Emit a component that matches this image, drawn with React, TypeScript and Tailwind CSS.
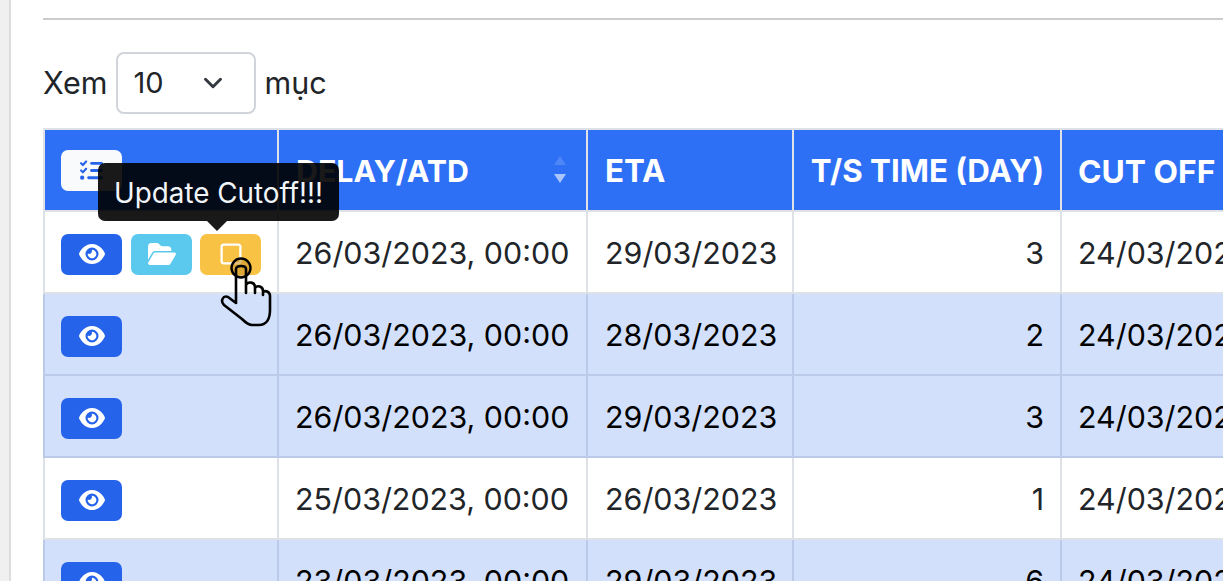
import React from 'react';
import { FaEye, FaFolderOpen, FaRegSquare, FaListCheck } from 'react-icons/fa6';
import { ChevronDown } from 'lucide-react';

interface ShipRow {
  atd: string;
  eta: string;
  days: number;
  cutoff: string;
  highlighted: boolean;
}

const rows: ShipRow[] = [
  { atd: '26/03/2023, 00:00', eta: '29/03/2023', days: 3, cutoff: '24/03/2023', highlighted: false },
  { atd: '26/03/2023, 00:00', eta: '28/03/2023', days: 2, cutoff: '24/03/2023', highlighted: true },
  { atd: '26/03/2023, 00:00', eta: '29/03/2023', days: 3, cutoff: '24/03/2023', highlighted: true },
  { atd: '25/03/2023, 00:00', eta: '26/03/2023', days: 1, cutoff: '24/03/2023', highlighted: false },
  { atd: '23/03/2023, 00:00', eta: '29/03/2023', days: 6, cutoff: '24/03/2023', highlighted: true },
];

const IconButton: React.FC<{ className: string; children: React.ReactNode }> = ({ className, children }) => (
  <button className={`w-[61px] h-[41px] rounded-[7px] flex items-center justify-center ${className}`}>{children}</button>
);

// hand cursor sitting on the yellow button
const HandCursor: React.FC = () => (
  <svg className="absolute left-[215px] top-[255px] w-[60px] h-[75px]" viewBox="0 0 60 75" fill="none" stroke="#000" strokeWidth="2.6" strokeLinecap="round" strokeLinejoin="round">
    <circle cx="26" cy="13" r="9.5" strokeWidth="2.4" fill="#c9952c" fillOpacity="0.6" />
    <path d="M21 48 V14 C21 10 31 10 31 14 V38 M31 30 C33 26 40 27 40 32 V38 M40 33 C42 30 48 31 48 36 V40 M48 37 C51 35 55 37 55 41 V55 C55 63 52 70 44 70 H37 C33 70 30 67 27 64 L9 50 C5 46 8 40 13 42 L21 48" />
  </svg>
);

const App: React.FC = () => {
  return (
    <div className="relative w-[1223px] h-[581px] overflow-hidden bg-white flex font-['Inter',sans-serif] text-[#212529]">
      <div className="w-[11px] shrink-0 bg-[#f0f0f0] border-r-2 border-[#dddddd]" />
      <div className="pl-[32px] flex-1 min-w-0">
        <div className="mt-[18px] h-[2px] bg-[#cccccc]" />
        <div className="mt-[32px] flex items-center gap-[9px] text-[30.5px] h-[62px]">
          <span>Xem</span>
          <div className="w-[140px] h-[62px] border-2 border-[#d1d5db] rounded-[8px] flex items-center justify-between pl-[15px] pr-[26px] text-[29px]">
            <span>10</span>
            <ChevronDown size={30} strokeWidth={2.4} className="text-[#343a40]" />
          </div>
          <span className="-ml-px">mục</span>
        </div>
        <table className="mt-[14px] table-fixed border-collapse w-[1317px] text-[30.4px]">
          <colgroup>
            <col className="w-[234px]" />
            <col className="w-[309px]" />
            <col className="w-[206px]" />
            <col className="w-[268px]" />
            <col className="w-[300px]" />
          </colgroup>
          <thead>
            <tr className="h-[82px] bg-[#2d70f5] text-white font-bold text-left text-[31.3px]">
              <th className="border-2 border-[#dee2e6] px-[16px]">
                <IconButton className="bg-[#f8fafc] text-[#2563eb]"><FaListCheck size={23} /></IconButton>
              </th>
              <th className="relative border-2 border-[#dee2e6] pl-[17px] pt-[3px] text-[30.3px]">
                DELAY/ATD
                <span className="absolute right-[20px] top-[26px] flex flex-col items-center gap-[9px]">
                  <span className="w-0 h-0 border-x-[6px] border-x-transparent border-b-[9px] border-b-[#4d86f6]" />
                  <span className="w-0 h-0 border-x-[6px] border-x-transparent border-t-[9px] border-t-[#a9c5fb]" />
                </span>
              </th>
              <th className="border-2 border-[#dee2e6] pl-[17px] pt-[3px]">ETA</th>
              <th className="border-2 border-[#dee2e6] pr-[16px] pt-[3px] text-right whitespace-nowrap">T/S TIME (DAY)</th>
              <th className="border-2 border-[#dee2e6] pl-[16px] pt-[3px] text-[31.8px]">CUT OFF</th>
            </tr>
          </thead>
          <tbody>
            {rows.map((row, i) => {
              const cell = row.highlighted ? 'border-2 border-[#bccae9]' : 'border-2 border-[#dee2e6]';
              return (
                <tr key={i} className={`h-[82px] ${row.highlighted ? 'bg-[#d3e0fb] text-black' : 'bg-white'}`}>
                  <td className={`${cell} px-[16px] pt-[4px]`}>
                    <div className="flex gap-[9px]">
                      <IconButton className="bg-[#2563eb] text-white"><FaEye size={26} /></IconButton>
                      {i === 0 && (
                        <>
                          <IconButton className="bg-[#5bc8ee] text-white"><FaFolderOpen size={28} /></IconButton>
                          <IconButton className="-ml-px bg-[#f8c244] text-white"><FaRegSquare size={24} /></IconButton>
                        </>
                      )}
                    </div>
                  </td>
                  <td className={`${cell} pl-[16px] pt-[4px] whitespace-nowrap`}>{row.atd}</td>
                  <td className={`${cell} pl-[17px] pt-[4px]`}>{row.eta}</td>
                  <td className={`${cell} pr-[16px] pt-[4px] text-right`}>{row.days}</td>
                  <td className={`${cell} pl-[16px] pt-[4px] whitespace-nowrap`}>{row.cutoff}</td>
                </tr>
              );
            })}
          </tbody>
        </table>
      </div>

      {/* tooltip of the yellow button */}
      <div className="absolute left-[98px] top-[163px] w-[241px] h-[58px] rounded-[7px] bg-black/90 text-[#f1f5f9] text-[27.8px] flex items-center justify-center pt-[3px]">
        Update Cutoff!!!
        <span className="absolute left-[109px] top-[58px] w-0 h-0 border-x-[10px] border-x-transparent border-t-[10px] border-t-black/90" />
      </div>
      <HandCursor />
    </div>
  );
};

export default App;
